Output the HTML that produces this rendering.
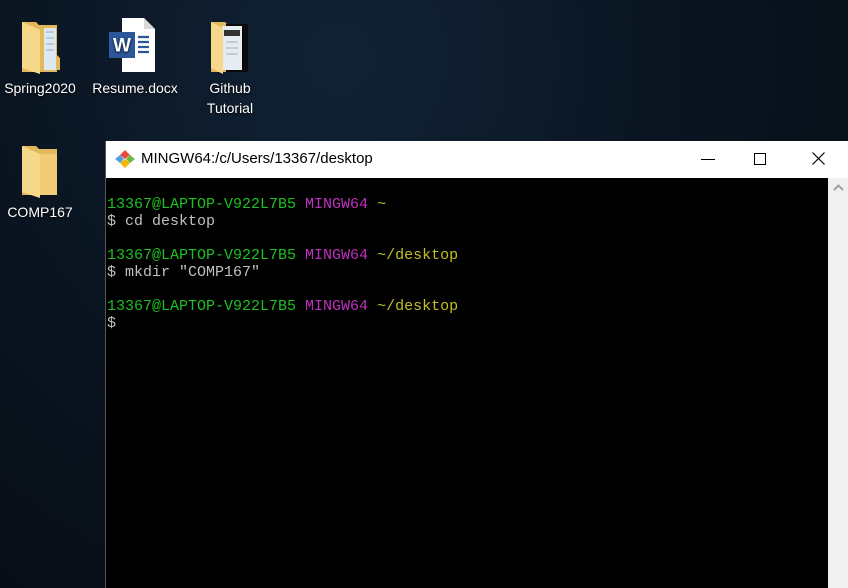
<!DOCTYPE html>
<html><head><style>
body{margin:0;width:848px;height:588px;overflow:hidden;background:radial-gradient(ellipse at 40% 10%,#112236 0%,#0a1420 50%,#050a10 100%);font-family:"Liberation Sans",sans-serif;position:relative}
.ic{position:absolute;color:#fff;font-size:14px;text-shadow:0 1px 2px #000;line-height:20px;text-align:center}
.ic svg{position:absolute}
.lb{position:absolute;left:0;width:100%}
.win{position:absolute;left:105px;top:141px;width:743px;height:447px;background:#000;border-left:1px solid #555}
.tb{height:37px;background:#fff;position:relative;font-size:15px;color:#000}
.term{position:absolute;left:1px;top:55px;font-family:"Liberation Mono",monospace;font-size:15px;line-height:17px;color:#c0c0c0;white-space:pre}
.g{color:#1dc121}.m{color:#c030c0}.y{color:#c0c020}
.sb{position:absolute;right:0;top:37px;width:21px;bottom:0;background:#f0f0f0}
</style></head><body>
<div class="ic" style="left:0;top:0;width:80px;height:120px">
<svg style="left:18px;top:18px" width="42" height="56" viewBox="0 0 42 56"><path d="M4 4h14l3 3h18v47H4z" fill="#e2b95a"/><path d="M26 10h12v42H26z" fill="#dde8f0"/><path d="M28 14h8M28 20h8M28 26h8M28 32h8" stroke="#8fb0c8"/><path d="M4 4l18 8v44L4 50z" fill="#f5d889"/><path d="M38 36l4 4v12h-4z" fill="#e2b95a"/></svg>
<div class="lb" style="top:78px">Spring2020</div></div>
<div class="ic" style="left:88px;top:0;width:94px;height:120px">
<svg style="left:20px;top:17px" width="50" height="56" viewBox="0 0 50 56"><path d="M14 1h22l11 11v43H14z" fill="#fff"/><path d="M36 1v11h11z" fill="#d8d8d8"/><rect x="20" y="14" width="22" height="24" fill="#e8eef8" opacity="0"/><rect x="1" y="15" width="26" height="26" fill="#2b579a"/><text x="14" y="34.5" font-size="19" font-weight="bold" fill="#fff" text-anchor="middle" font-family="Liberation Sans">W</text><path d="M30 20h11M30 25h11M30 30h11M30 35h11" stroke="#2b579a" stroke-width="2.2"/></svg>
<div class="lb" style="top:78px">Resume.docx</div></div>
<div class="ic" style="left:190px;top:0;width:80px;height:120px">
<svg style="left:18px;top:18px" width="44" height="56" viewBox="0 0 44 56"><path d="M3 4h14l3 3h18v47H3z" fill="#e2b95a"/><path d="M18 6h22v48H18z" fill="#0a0a0a"/><path d="M14 8h20v44H14z" fill="#e6edf2"/><path d="M16 12h16v6H16z" fill="#333"/><path d="M18 24h12M18 30h12M18 36h12" stroke="#9ab"/><path d="M3 4l12 6v46L3 50z" fill="#f5d889"/></svg>
<div class="lb" style="top:78px">Github<br>Tutorial</div></div>
<div class="ic" style="left:0;top:124px;width:80px;height:100px">
<svg style="left:18px;top:18px" width="42" height="56" viewBox="0 0 42 56"><path d="M4 4h14l3 3h18v46H4z" fill="#e2b95a"/><path d="M4 4l18 8v44L4 50z" fill="#f5d889"/><path d="M22 12h17v41H22z" fill="#f0cd75"/></svg>
<div class="lb" style="top:78px">COMP167</div></div>
<div class="win">
<div class="tb">
<svg style="position:absolute;left:9px;top:9px" width="20" height="18" viewBox="0 0 20 18"><path d="M10 0l5 5-5 4-5-4z" fill="#e94c3d"/><path d="M5 5l4 4-4 4-5-4z" fill="#4ea0e0"/><path d="M15 5l5 4-5 4-4-4z" fill="#6bb84a"/><path d="M10 9l5 4-5 5-5-5z" fill="#f4b400"/></svg>
<span style="position:absolute;left:35px;top:9px">MINGW64:/c/Users/13367/desktop</span>
<div style="position:absolute;left:595px;top:18px;width:14px;height:1px;background:#000"></div>
<div style="position:absolute;left:648px;top:12px;width:10px;height:10px;border:1px solid #000"></div>
<svg style="position:absolute;left:706px;top:11px" width="13" height="13"><path d="M0.5 0.5L12.5 12.5M12.5 0.5L0.5 12.5" stroke="#000" stroke-width="1.2"/></svg>
</div>
<div class="term"><span class="g">13367@LAPTOP-V922L7B5</span> <span class="m">MINGW64</span> <span class="y">~</span>
$ cd desktop

<span class="g">13367@LAPTOP-V922L7B5</span> <span class="m">MINGW64</span> <span class="y">~/desktop</span>
$ mkdir "COMP167"

<span class="g">13367@LAPTOP-V922L7B5</span> <span class="m">MINGW64</span> <span class="y">~/desktop</span>
$</div>
<div class="sb"><svg style="position:absolute;left:5px;top:6px" width="11" height="7"><path d="M1 6l4.5-4.5L10 6" stroke="#a0a0a0" stroke-width="2" fill="none"/></svg></div>
</div>
</body></html>
